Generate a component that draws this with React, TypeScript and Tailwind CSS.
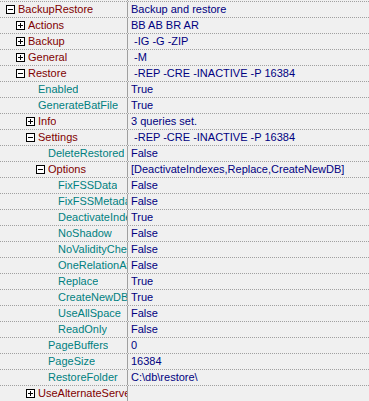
import { Fragment } from "react";

type Row = {
  name: string;
  value: string;
  level: number;
  box?: "plus" | "minus";
};

const rows: Row[] = [
  { name: "BackupRestore", value: "Backup and restore", level: 0, box: "minus" },
  { name: "Actions", value: "BB AB BR AR", level: 1, box: "plus" },
  { name: "Backup", value: " -IG -G -ZIP", level: 1, box: "plus" },
  { name: "General", value: " -M", level: 1, box: "plus" },
  { name: "Restore", value: " -REP -CRE -INACTIVE -P 16384", level: 1, box: "minus" },
  { name: "Enabled", value: "True", level: 2 },
  { name: "GenerateBatFile", value: "True", level: 2 },
  { name: "Info", value: "3 queries set.", level: 2, box: "plus" },
  { name: "Settings", value: " -REP -CRE -INACTIVE -P 16384", level: 2, box: "minus" },
  { name: "DeleteRestored", value: "False", level: 3 },
  { name: "Options", value: "[DeactivateIndexes,Replace,CreateNewDB]", level: 3, box: "minus" },
  { name: "FixFSSData", value: "False", level: 4 },
  { name: "FixFSSMetadata", value: "False", level: 4 },
  { name: "DeactivateIndexes", value: "True", level: 4 },
  { name: "NoShadow", value: "False", level: 4 },
  { name: "NoValidityCheck", value: "False", level: 4 },
  { name: "OneRelationAtATime", value: "False", level: 4 },
  { name: "Replace", value: "True", level: 4 },
  { name: "CreateNewDB", value: "True", level: 4 },
  { name: "UseAllSpace", value: "False", level: 4 },
  { name: "ReadOnly", value: "False", level: 4 },
  { name: "PageBuffers", value: "0", level: 3 },
  { name: "PageSize", value: "16384", level: 3 },
  { name: "RestoreFolder", value: "C:\\db\\restore\\", level: 3 },
  { name: "UseAlternateServer", value: "", level: 2, box: "plus" },
];

// indent per level, written out so tailwind picks them up
const indent = ["pl-[6px]", "pl-[16px]", "pl-[26px]", "pl-[36px]", "pl-[46px]"];

function ExpandBox({ kind }: { kind: "plus" | "minus" }) {
  return (
    <svg width="9" height="9" viewBox="0 0 9 9" className="shrink-0 mr-[3px]" shapeRendering="crispEdges">
      <rect x="0.5" y="0.5" width="8" height="8" fill="#ffffff" stroke="#000000" />
      <line x1="2" y1="4.5" x2="7" y2="4.5" stroke="#000000" />
      {kind === "plus" && <line x1="4.5" y1="2" x2="4.5" y2="7" stroke="#000000" />}
    </svg>
  );
}

export default function App() {
  return (
    <div className="w-[369px] h-[401px] overflow-hidden bg-[#f0f0f0] font-['Liberation_Sans',Arial,sans-serif] text-[11px] leading-[15px]">
      <div className="flex h-[2px] border-b border-dotted border-[#a0a0a0]">
        <div className="w-[127px] shrink-0" />
        <div className="flex-1 border-l border-[#a0a0a0]" />
      </div>
      {rows.map((r, i) => (
        <Fragment key={i}>
          <div className="flex h-[16px] border-b border-dotted border-[#a0a0a0]">
            <div
              className={`w-[127px] shrink-0 flex items-center overflow-hidden whitespace-nowrap ${indent[r.level]}`}
            >
              {r.box ? <ExpandBox kind={r.box} /> : <span className="w-[12px] shrink-0" />}
              <span className={`min-w-0 overflow-hidden ${r.box ? "text-[#800000]" : "text-[#008080]"}`}>
                {r.name}
              </span>
            </div>
            <div className="flex-1 border-l border-[#a0a0a0] pl-[3px] whitespace-pre text-[#000080] overflow-hidden">
              {r.value}
            </div>
          </div>
        </Fragment>
      ))}
    </div>
  );
}
